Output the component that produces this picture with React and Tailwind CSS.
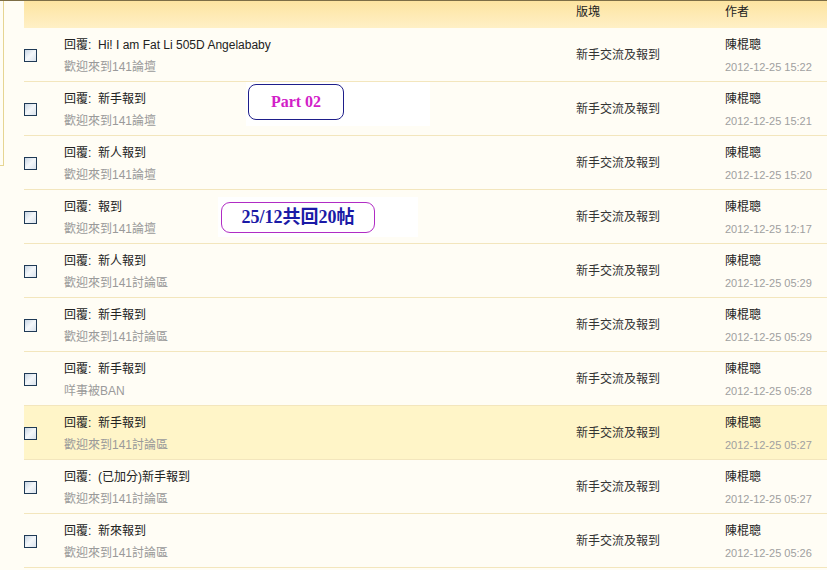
import React from "react";

const rows = [
  { t: "回覆:  Hi! I am Fat Li 505D Angelababy", s: "歡迎來到141論壇", d: "2012-12-25 15:22" },
  { t: "回覆:  新手報到", s: "歡迎來到141論壇", d: "2012-12-25 15:21" },
  { t: "回覆:  新人報到", s: "歡迎來到141論壇", d: "2012-12-25 15:20" },
  { t: "回覆:  報到", s: "歡迎來到141論壇", d: "2012-12-25 12:17" },
  { t: "回覆:  新人報到", s: "歡迎來到141討論區", d: "2012-12-25 05:29" },
  { t: "回覆:  新手報到", s: "歡迎來到141討論區", d: "2012-12-25 05:29" },
  { t: "回覆:  新手報到", s: "咩事被BAN", d: "2012-12-25 05:28" },
  { t: "回覆:  新手報到", s: "歡迎來到141討論區", d: "2012-12-25 05:27", hl: true },
  { t: "回覆:  (已加分)新手報到", s: "歡迎來到141討論區", d: "2012-12-25 05:27" },
  { t: "回覆:  新來報到", s: "歡迎來到141討論區", d: "2012-12-25 05:26" },
];

const font = { fontFamily: '"Liberation Sans", "Noto Sans CJK TC", sans-serif' };

function Check() {
  return (
    <div className="w-[13px] h-[13px] border border-[#1f3a56] bg-gradient-to-br from-[#c9d6e4] via-[#f4f7fa] to-[#d9e2ec]" />
  );
}

export default function App() {
  return (
    <div
      className="relative w-[827px] h-[570px] overflow-hidden bg-[#fffdf5] border-t border-[#7d6e46] flex"
      style={font}
    >
      <div className="w-[24px] shrink-0">
        <div className="w-[4px] h-[165px] border-r border-b border-[#e6d592]" />
      </div>
      <div className="flex-1 flex flex-col">
        <div className="h-[27px] shrink-0 grid grid-cols-[40px_512px_149px_1fr] bg-gradient-to-b from-[#fde4a0] to-[#fff0c6] text-[12px] text-[#222]">
          <div />
          <div />
          <div className="pt-[2px]">版塊</div>
          <div className="pt-[2px]">作者</div>
        </div>
        {rows.map((r, i) => (
          <div
            key={i}
            className={`h-[54px] shrink-0 grid grid-cols-[40px_512px_149px_1fr] border-b border-[#f3e6bd] ${
              r.hl ? "bg-[#fff5c8]" : "bg-[#fffdf5]"
            }`}
          >
            <div className="flex items-center pt-[1px]">
              <Check />
            </div>
            <div className="flex flex-col pt-[9px] gap-[6px]">
              <div className="text-[12px] leading-[16px] text-[#222] whitespace-pre">{r.t}</div>
              <div className="text-[12px] leading-[16px] text-[#9a9a9a]">{r.s}</div>
            </div>
            <div className="flex items-center pt-[1px] text-[12px] text-[#333]">新手交流及報到</div>
            <div className="flex flex-col pt-[9px] gap-[6px]">
              <div className="text-[12px] leading-[16px] text-[#222]">陳棍聰</div>
              <div className="text-[11px] leading-[16px] text-[#a0a0a0]">{r.d}</div>
            </div>
          </div>
        ))}
      </div>

      <div className="absolute left-[246px] top-[81px] w-[184px] h-[44px] bg-white" />
      <div
        className="absolute left-[248px] top-[83px] w-[96px] h-[36px] border border-[#1e1e8a] rounded-[8px] bg-white flex items-center justify-center text-[16px] font-bold text-[#d21ec8]"
        style={{ fontFamily: '"Liberation Serif", serif' }}
      >
        Part 02
      </div>

      <div className="absolute left-[218px] top-[196px] w-[200px] h-[40px] bg-white" />
      <div
        className="absolute left-[221px] top-[201px] w-[154px] h-[31px] border border-[#b02cc4] rounded-[9px] bg-white flex items-center justify-center text-[18px] font-bold text-[#1a1aa6]"
        style={{ fontFamily: '"Liberation Serif", "Noto Sans CJK TC", serif' }}
      >
        25/12共回20帖
      </div>
    </div>
  );
}
